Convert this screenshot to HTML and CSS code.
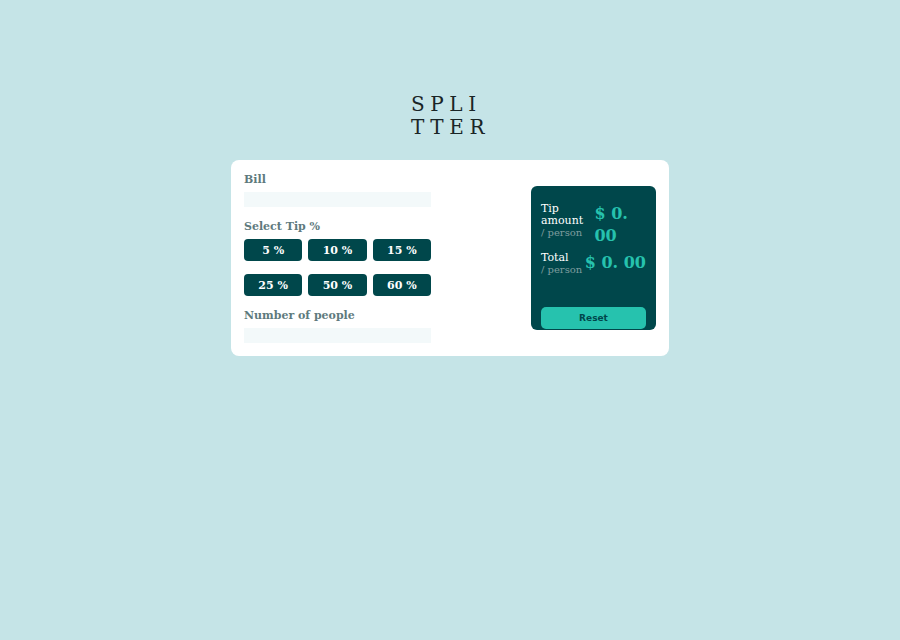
FILE: index.html
```html
<!DOCTYPE html>
<html lang="en">
<head>
<meta charset="utf-8">
<title>Splitter</title>
<link rel="stylesheet" href="styles.css">
</head>
<body>
<main class="page">
  <h1 class="logo">SPLITTER</h1>
  <section class="card">
    <div class="inputs">
      <div class="field">
        <label class="label">Bill</label>
        <div class="input"></div>
      </div>
      <div class="field">
        <span class="label">Select Tip %</span>
        <div class="tips">
          <button class="tip">5 %</button>
          <button class="tip">10 %</button>
          <button class="tip">15 %</button>
          <button class="tip">25 %</button>
          <button class="tip">50 %</button>
          <button class="tip">60 %</button>
        </div>
      </div>
      <div class="field">
        <label class="label">Number of people</label>
        <div class="input"></div>
      </div>
    </div>
    <div class="result">
      <div class="row">
        <div class="desc">
          <div class="name">Tip amount</div>
          <div class="per">/ person</div>
        </div>
        <div class="amount">$ 0. 00</div>
      </div>
      <div class="row">
        <div class="desc">
          <div class="name">Total</div>
          <div class="per">/ person</div>
        </div>
        <div class="amount">$ 0. 00</div>
      </div>
      <button class="reset">Reset</button>
    </div>
  </section>
</main>
</body>
</html>
```

FILE: styles.css
```css
* { box-sizing: border-box; }

body {
  margin: 0;
  background: #c5e4e7;
  font-family: "DejaVu Serif", serif;
}

.page {
  padding-top: 93px;
}

.logo {
  width: 86px;
  margin: 0 0 21px calc(50% - 39px);
  font-size: 20px;
  line-height: 23px;
  font-weight: normal;
  letter-spacing: 5.6px;
  color: #1a2526;
  word-break: break-all;
  text-align: left;
}

.card {
  width: 438px;
  margin: 0 auto;
  background: #ffffff;
  border-radius: 8px;
  padding: 13px;
  display: flex;
  justify-content: space-between;
  align-items: center;
}

.inputs {
  width: 187px;
  display: flex;
  flex-direction: column;
  gap: 13px;
}

.field {
  display: flex;
  flex-direction: column;
  gap: 6px;
}

.label {
  font-size: 11px;
  line-height: 13px;
  font-weight: bold;
  color: #5e7a7d;
}

.input {
  height: 15px;
  background: #f3f9fa;
}

.tips {
  display: grid;
  grid-template-columns: repeat(3, 1fr);
  column-gap: 6px;
  row-gap: 13px;
}

.tip {
  height: 22px;
  border: none;
  border-radius: 4px;
  background: #00474b;
  color: #ffffff;
  font-family: "DejaVu Serif", serif;
  font-weight: bold;
  font-size: 11px;
  padding: 0;
}

.result {
  width: 125px;
  height: 144px;
  background: #00474b;
  border-radius: 6px;
  padding: 17px 10px 1px;
  display: flex;
  flex-direction: column;
  gap: 5px;
}

.row {
  display: flex;
  justify-content: space-between;
  align-items: flex-start;
}

.desc {
  font-size: 11px;
  line-height: 12px;
}

.name { color: #ffffff; }
.per { color: #7f9d9f; font-size: 10px; }

.amount {
  font-size: 16px;
  line-height: 22px;
  font-weight: bold;
  color: #26c2ae;
}

.reset {
  margin-top: auto;
  height: 22px;
  border: none;
  border-radius: 5px;
  background: #26c2ae;
  color: #00474b;
  font-family: "DejaVu Sans", sans-serif;
  font-weight: bold;
  font-size: 9px;
}
```
